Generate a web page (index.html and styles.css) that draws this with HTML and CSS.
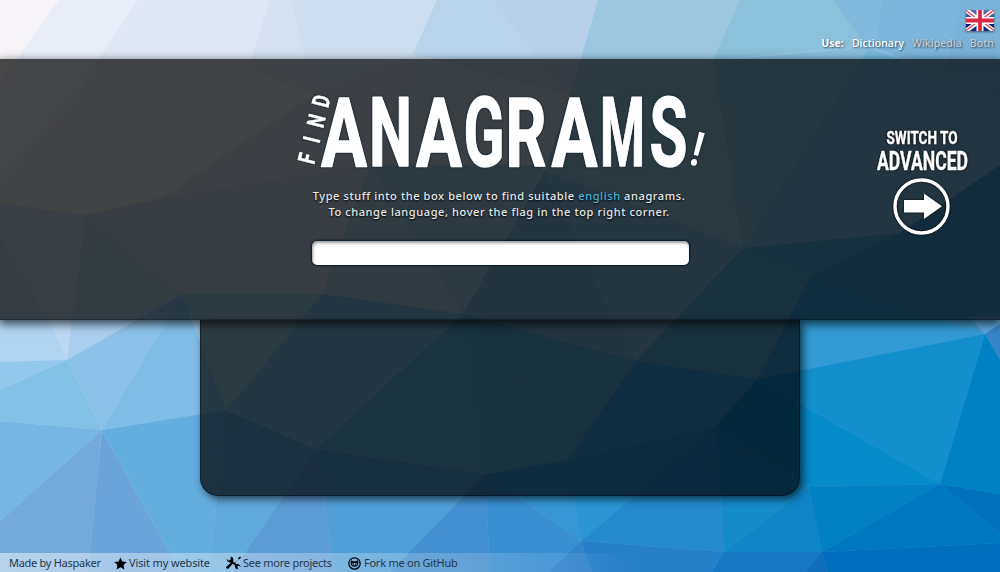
FILE: index.html
```html
<!DOCTYPE html>
<html lang="en">
<head>
<meta charset="utf-8">
<title>Find Anagrams!</title>
<link rel="stylesheet" href="styles.css">
</head>
<body>
<svg class="backdrop" viewBox="0 0 1000 572" preserveAspectRatio="none" aria-hidden="true">
  <defs>
    <linearGradient id="sky" x1="0" y1="0" x2="1" y2=".7"><stop offset="0" stop-color="#f4f2f8"/><stop offset=".5" stop-color="#a8cfea"/><stop offset="1" stop-color="#3f98d1"/></linearGradient>
  </defs>
  <rect width="1000" height="572" fill="url(#sky)"/>
  <g class="facets">
    <path fill="#f7f5f9" d="M0 0H59L0 83z"/>
    <path fill="#e8edf8" d="M59 0H138L78 92L0 103V83z"/>
    <path fill="#dfe6f4" d="M138 0H270L248 68L78 92z"/>
    <path fill="#d5e1f0" d="M270 0H291L313 95L248 68z"/>
    <path fill="#cfdeee" d="M291 0H437L413 54L313 95z"/>
    <path fill="#b9d4ea" d="M437 0H493L537 57L575 95L413 54z"/>
    <path fill="#b7d0e8" d="M493 0H598L570 95L537 57z"/>
    <path fill="#9cc7e1" d="M598 0H740L713 60L570 95z"/>
    <path fill="#8bc1dd" d="M740 0H833L868 45L713 60z"/>
    <path fill="#80b9db" d="M833 0H881L877 48H868z"/>
    <path fill="#7bb5db" d="M881 0H961L945 75L877 48z"/>
    <path fill="#79b1d8" d="M961 0H1000V75H945z"/>
    <path fill="#eaedf2" d="M0 103L78 92L0 182z"/>
    <path fill="#e4e7eb" d="M78 92L248 68L313 95L162 198L85 215L0 203V182z"/>
    <path fill="#cddbe9" d="M248 68L313 95L413 54L400 95L370 165L162 198L313 95z"/>
    <path fill="#c8dae9" d="M413 54L570 95L545 170L370 165L400 95z"/>
    <path fill="#c5d9e9" d="M0 203L85 215L76 294L67 360L0 240z"/>
    <path fill="#b9d2e8" d="M0 235L67 360L0 362z"/>
    <path fill="#b4d6e4" d="M85 215L182 294L67 360L76 294z"/>
    <path fill="#c0d6e9" d="M85 215L162 198L182 294z"/>
    <path fill="#bad2e5" d="M162 198L322 294H182z"/>
    <path fill="#c2d6e9" d="M162 198L370 165L322 294z"/>
    <path fill="#a8cbe2" d="M370 165L463 314L322 294z"/>
    <path fill="#9bc8e2" d="M370 165H545L463 314z"/>
    <path fill="#96c5df" d="M570 95L713 60L743 248L545 170z"/>
    <path fill="#87bedc" d="M713 60L868 48L743 248z"/>
    <path fill="#78b8db" d="M868 48L945 75L1000 100V165L900 233L743 248z"/>
    <path fill="#78b4da" d="M463 314L545 170L598 286L636 361z"/>
    <path fill="#80b9dc" d="M545 170L743 248L636 361L598 286z"/>
    <path fill="#56a9d3" d="M743 248L811 276L757 379L636 361z"/>
    <path fill="#4fa4d2" d="M743 248L900 233L811 276z"/>
    <path fill="#4399cb" d="M900 233L1000 165V330L985 334L811 276z"/>
    <path fill="#339bd3" d="M811 276L985 334L757 379z"/>
    <path fill="#5ba6da" d="M967 316H1000V325L985 334z"/>
    <path fill="#3785c7" d="M985 334L1000 324V360z"/>
    <path fill="#aed4f2" d="M0 310H44L67 360L0 362z"/>
    <path fill="#bcd8f2" d="M44 310H73L67 360z"/>
    <path fill="#a9cff0" d="M73 310H154L67 360z"/>
    <path fill="#91c8ec" d="M0 362L67 360L0 390z"/>
    <path fill="#83c1e7" d="M0 390L67 360L102 430L0 421z"/>
    <path fill="#8cc2e9" d="M67 360L182 294L102 430z"/>
    <path fill="#7fbde6" d="M182 294L226 410L102 430z"/>
    <path fill="#98c6e2" d="M182 294H322L226 410z"/>
    <path fill="#7dbbe3" d="M322 294L463 314L316 449L226 410z"/>
    <path fill="#5bb1da" d="M463 314L485 474L316 449z"/>
    <path fill="#52acd5" d="M463 314L567 460L485 474z"/>
    <path fill="#54a9d3" d="M463 314L636 361L567 460z"/>
    <path fill="#309fd8" d="M636 361L757 379L716 426L567 460z"/>
    <path fill="#76b6e5" d="M0 421L102 430L0 521z"/>
    <path fill="#74a9dc" d="M0 521L102 430L88 572H0z"/>
    <path fill="#6aa4db" d="M102 430L180 572H88z"/>
    <path fill="#64addf" d="M102 430L226 410L209 572H180z"/>
    <path fill="#61aadd" d="M226 410L316 449L232 572H209z"/>
    <path fill="#5b9bd6" d="M316 449L335 572H232z"/>
    <path fill="#509ed7" d="M316 449L485 474L390 572H335z"/>
    <path fill="#448fcf" d="M485 474L490 572H390z"/>
    <path fill="#3a8fd1" d="M485 474L581 541L548 572H490z"/>
    <path fill="#3597d4" d="M485 474L567 460L581 541z"/>
    <path fill="#2a97d3" d="M567 460L716 426L581 541z"/>
    <path fill="#248ccd" d="M716 426L724 552L581 541z"/>
    <path fill="#158bcb" d="M716 426L809 487L724 552z"/>
    <path fill="#088ac9" d="M716 426L757 379L809 487z"/>
    <path fill="#0f84c6" d="M809 487L822 552H724z"/>
    <path fill="#058acb" d="M757 379L940 484L809 487z"/>
    <path fill="#148fcd" d="M757 379L985 334L940 484z"/>
    <path fill="#0280c5" d="M809 487L940 484L822 552z"/>
    <path fill="#0077c2" d="M940 484L1000 533V543L822 552z"/>
    <path fill="#0070bf" d="M940 484L1000 494V533z"/>
    <path fill="#0081c5" d="M985 334L1000 360V494L940 484z"/>
    <path fill="#3584cb" d="M581 541L592 572H548z"/>
    <path fill="#267fc9" d="M581 541L724 552L712 572H592z"/>
    <path fill="#1478c4" d="M724 552H822L805 572H712z"/>
    <path fill="#0f6fbe" d="M822 552L828 572H805z"/>
    <path fill="#006fbf" d="M822 552L1000 543V572H828z"/>
  </g>
</svg>

<div class="page">
  <header class="topbar">
    <svg class="flag" viewBox="0 0 60 44" preserveAspectRatio="none" role="img" aria-label="English">
      <defs><linearGradient id="navy" x2="0" y2="1"><stop offset="0" stop-color="#6370ad"/><stop offset=".5" stop-color="#36458d"/><stop offset=".5" stop-color="#111e70"/><stop offset="1" stop-color="#16277c"/></linearGradient></defs>
      <path fill="url(#navy)" d="M0 0h60v44H0z"/>
      <path stroke="#fff" stroke-width="9" d="M0 0l60 44M60 0L0 44"/>
      <path stroke="#df4558" stroke-width="3" d="M0 1l28 21M60 0L32 21M28 22L0 43M32 22l28 21"/>
      <path stroke="#fff" stroke-width="15" d="M30 0v44M0 22h60"/>
      <path stroke="#dc2740" stroke-width="8" d="M30 0v44M0 22h60"/>
    </svg>
    <nav class="sources"><b>Use:</b><a class="active">Dictionary</a><a>Wikipedia</a><a>Both</a></nav>
  </header>

  <main class="panel">
    <section class="search">
      <svg class="logo" viewBox="0 0 420 90" role="img" aria-label="Find Anagrams!">
        <text class="logo-word" y="81"><tspan x="31" textLength="46" lengthAdjust="spacingAndGlyphs">A</tspan><tspan x="79" textLength="43" lengthAdjust="spacingAndGlyphs">N</tspan><tspan x="126" textLength="46" lengthAdjust="spacingAndGlyphs">A</tspan><tspan x="173.5" textLength="41" lengthAdjust="spacingAndGlyphs">G</tspan><tspan x="215.5" textLength="41" lengthAdjust="spacingAndGlyphs">R</tspan><tspan x="261.5" textLength="46" lengthAdjust="spacingAndGlyphs">A</tspan><tspan x="310" textLength="45" lengthAdjust="spacingAndGlyphs">M</tspan><tspan x="359.5" textLength="38" lengthAdjust="spacingAndGlyphs">S</tspan></text>
        <text class="logo-small" transform="translate(24 80) rotate(-76) scale(.72 1)" x="0 30 52 81">FIND</text>
        <text class="logo-mark" transform="translate(398 79) rotate(15) scale(.8 1)">!</text>
      </svg>
      <p class="intro">Type stuff into the box below to find suitable <span class="lang">english</span> anagrams.</p>
      <p class="intro second">To change language, hover the flag in the top right corner.</p>
      <input class="query" type="text" aria-label="Letters">
    </section>
    <aside class="switch">
      <svg viewBox="0 0 110 112" role="img" aria-label="Switch to advanced">
        <text class="switch-label" x="18.5" y="18.500" font-size="18.5" textLength="71" lengthAdjust="spacingAndGlyphs">SWITCH TO</text>
        <text class="switch-label" x="9" y="44.5" font-size="25" textLength="91" lengthAdjust="spacingAndGlyphs">ADVANCED</text>
        <circle cx="53.5" cy="81.5" r="26.5" fill="none" stroke="#fff" stroke-width="3.4"/>
        <path fill="#fff" d="M36 75h20v-6.500l18 12.700-18 12.800v-6.500H36z"/>
      </svg>
    </aside>
  </main>

  <section class="results"></section>

  <footer class="footer">
    <span class="credit">Made by Haspaker</span>
    <a class="site"><svg viewBox="0 0 24 24"><path d="M12 1l3.500 7.200 8 1.100-5.800 5.600 1.400 8L12 19l-7.100 3.900 1.400-8L.5 9.300l8-1.100z"/></svg>Visit my website</a>
    <a class="projects"><svg viewBox="0 0 32 32"><path d="M10 1q8 2 5 10l4 4 7-8V4l4-3 2 2-3 4h-3l-7 7 3 3q8-1 9 6l-4-3-3 3 2 5q-8 0-7-8l-4-4-10 11q-3 1-5-2Q-1 24 2 22l9-8Q3 15 1 6l5 4 4-3z"/></svg>See more projects</a>
    <a class="github"><svg viewBox="0 0 28 28"><circle cx="14" cy="14" r="12.300" fill="none" stroke="#000" stroke-width="2.700"/><path d="M7 7l4 2h6l4-2q2 4 1 8-1 6-8 6t-8-6Q5 11 7 7z"/><rect x="9" y="13" width="10" height="5" rx="2.500" fill="#94bfe3"/><path d="M11 13.500h2v3h-2zM15 13.500h2v3h-2z"/></svg>Fork me on GitHub</a>
  </footer>
</div>
</body>
</html>
```
FILE: styles.css
```css
* { box-sizing: border-box; }
html, body { margin: 0; width: 100%; height: 100%; overflow: hidden; }
body { font-family: "Noto Sans", "Open Sans", sans-serif; color: #fff; }
.backdrop { position: absolute; inset: 0; width: 100%; height: 100%; z-index: -1; }
.facets { stroke-linejoin: round; }
.page { display: flex; flex-direction: column; width: 100%; height: 572px; }

.topbar { height: 59px; padding: 10px 6px 0 0; display: flex; flex-direction: column; align-items: flex-end; }
.flag { width: 28px; height: 21px; display: block; box-shadow: 0 1px 2px rgba(0,0,0,.45); }
.sources { display: flex; gap: 8px; margin-top: 5px; font-size: 10.5px; font-weight: 500; line-height: 15px; letter-spacing: .06px; text-shadow: 1px 1px 2px rgba(0,0,0,.6); }
.sources a { color: #c4cbd1; }
.sources .active { color: #fff; }

.panel { position: relative; z-index: 2; height: 261px; flex: none; display: grid; grid-template-columns: 1fr 420px 1fr; background: rgba(0,0,0,.71); border-bottom: 1px solid rgba(0,0,0,.25); box-shadow: 0 3px 9px 1px rgba(0,0,0,.68); }
.search { grid-column: 2; padding-top: 26px; display: flex; flex-direction: column; align-items: center; }
.logo { width: 420px; height: 90px; display: block; overflow: visible; fill: #fff; font-family: Roboto, sans-serif; font-weight: 700; filter: drop-shadow(0 0 1px #071a25); }
.logo-word { font-size: 96px; stroke: #fff; stroke-width: 1.4px; stroke-linejoin: round; }
.logo-small { font-size: 24px; stroke: #fff; stroke-width: .5px; }
.logo-mark { font-size: 48px; }
.intro { margin: 13px 0 0; font-size: 11px; font-weight: 500; line-height: 16px; letter-spacing: .6px; white-space: nowrap; color: #e6e9eb; text-shadow: 0 1px 2px #000; transform: translateX(-1px); }
.intro.second { margin: 0; }
.lang { color: #48b4dc; }
.query { width: 377px; height: 24px; margin-top: 21px; padding: 0 6px; border: 0; border-radius: 5px; background: #fff; outline: none; box-shadow: inset 1px 2px 3px rgba(0,0,0,.4), 0 0 2px 1px #06192a; }
.switch { padding-top: 66px; display: flex; justify-content: flex-end; }
.switch svg { width: 110px; height: 112px; margin-right: 22px; overflow: visible; filter: drop-shadow(0 0 1px #000); }
.switch-label { fill: #fff; stroke: #fff; stroke-width: .4px; font-family: Roboto, sans-serif; font-weight: 700; }

.results { position: relative; z-index: 1; flex: none; align-self: center; width: 600px; height: 176px; border-radius: 0 0 18px 18px; background: rgba(0,0,0,.71); box-shadow: 3px 3px 8px rgba(0,0,0,.65); border: 1px solid rgba(0,0,0,.4); border-top: 0; }

.footer { margin-top: auto; height: 19px; padding: 1px 0 0 9px; display: flex; align-items: center; font-size: 11px; line-height: 18px; letter-spacing: -.25px; color: #24384a; background: linear-gradient(90deg, rgba(255,255,255,.48), rgba(255,255,255,.18) 45%, transparent 65%); white-space: nowrap; }
.footer a { display: flex; align-items: center; }
.footer svg { display: block; fill: #000; flex: none; }
.credit { width: 105px; letter-spacing: -.28px; }
.site { width: 112px; letter-spacing: -.13px; }
.site svg { width: 13px; height: 13px; margin-right: 2px; }
.projects { width: 122px; }
.projects svg { width: 15px; height: 15px; margin-right: 2px; }
.github svg { width: 13px; height: 13px; margin-right: 3px; }
```
